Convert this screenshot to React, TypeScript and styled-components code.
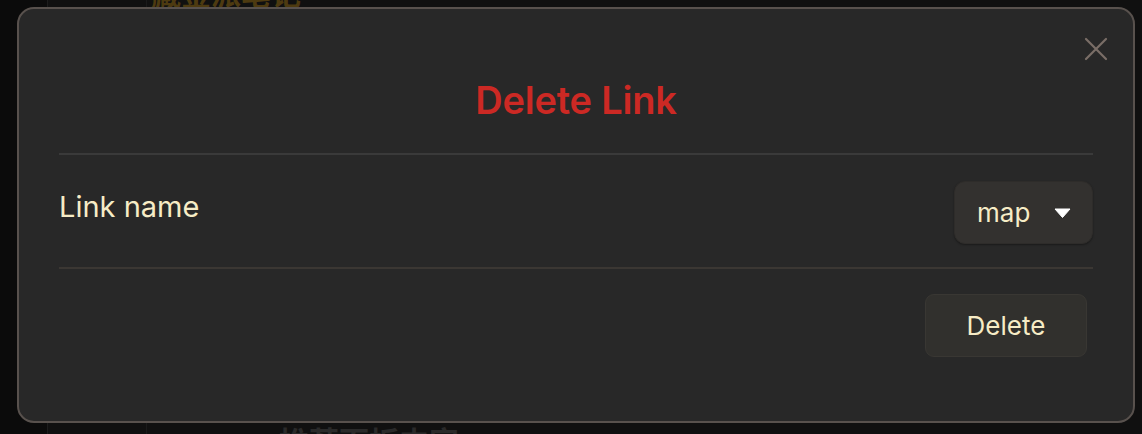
import React from "react";
import styled, { createGlobalStyle } from "styled-components";

const GlobalStyle = createGlobalStyle`
  html, body {
    margin: 0;
    padding: 0;
    background: #0c0c0c;
  }
  body {
    font-family: Inter, "Noto Sans", "Noto Sans CJK SC", sans-serif;
  }
  * {
    box-sizing: border-box;
  }
`;

const Page = styled.div`
  position: relative;
  display: flex;
  width: 1142px;
  height: 434px;
  overflow: hidden;
  background: #0c0c0c;
`;

const Rail = styled.div`
  width: 48px;
  flex-shrink: 0;
  background: #0b0b0b;
  border-right: 1px solid #1c1c1c;
`;

const SidePanel = styled.div`
  width: 99px;
  flex-shrink: 0;
  background: #101010;
  border-right: 1px solid #1a1a1a;
`;

const Main = styled.div`
  flex: 1;
  display: flex;
  flex-direction: column;
  justify-content: space-between;
  background: #101010;
  font-family: "Noto Sans CJK SC", sans-serif;
`;

const TopHeading = styled.div`
  margin-top: -30px;
  padding-left: 4px;
  font-size: 30px;
  font-weight: 700;
  color: #4d3a10;
`;

const BottomHeading = styled.div`
  margin-bottom: -28px;
  padding-left: 132px;
  font-size: 30px;
  font-weight: 700;
  color: #2a2a2a;
`;

const Modal = styled.div`
  position: absolute;
  left: 17px;
  top: 7px;
  width: 1118px;
  height: 416px;
  display: flex;
  flex-direction: column;
  padding: 0 40px;
  background: #282828;
  border: 2px solid #58514d;
  border-radius: 17px;
`;

const CloseButton = styled.button`
  position: absolute;
  top: 27px;
  right: 24px;
  width: 26px;
  height: 26px;
  display: flex;
  align-items: center;
  justify-content: center;
  padding: 0;
  background: none;
  border: none;
  cursor: pointer;
`;

const Title = styled.h2`
  margin: 0;
  height: 146px;
  display: flex;
  align-items: center;
  justify-content: center;
  padding-top: 38px;
  font-size: 38px;
  font-weight: 600;
  letter-spacing: -0.2px;
  color: #cc2924;
  border-bottom: 2px solid #3a3a3a;
`;

const Row = styled.div`
  height: 114px;
  display: flex;
  align-items: center;
  justify-content: space-between;
  border-bottom: 2px solid #3b3733;
`;

const Label = styled.span`
  margin-top: -10px;
  font-size: 29px;
  font-weight: 400;
  color: #f6ecc6;
`;

const Select = styled.div`
  width: 139px;
  height: 63px;
  margin-top: 3px;
  display: flex;
  align-items: center;
  justify-content: space-between;
  padding: 0 21px 0 22px;
  background: #33312f;
  border: 1px solid #2e2c2a;
  border-radius: 11px;
  box-shadow: 0 1px 2px rgba(0, 0, 0, 0.35);
  font-size: 26px;
  color: #f6ecc6;
`;

const Footer = styled.div`
  display: flex;
  justify-content: flex-end;
  padding: 25px 6px 0 0;
`;

const ActionButton = styled.button`
  width: 162px;
  height: 63px;
  background: #31302d;
  border: 1px solid #393733;
  border-radius: 9px;
  font-family: Inter, sans-serif;
  font-size: 26px;
  color: #f6ecc6;
  cursor: pointer;
`;

const CloseIcon = () => (
  <svg width="24" height="24" viewBox="0 0 24 24">
    <path d="M2 2 L22 22 M22 2 L2 22" stroke="#7a6e67" strokeWidth="2.2" strokeLinecap="round" />
  </svg>
);

const Caret = () => (
  <svg width="17" height="10" viewBox="0 0 17 10">
    <path d="M1 1 H16 L8.5 9.5 Z" fill="#ffffff" stroke="#ffffff" strokeWidth="1" strokeLinejoin="round" />
  </svg>
);

const App = () => {
  return (
    <>
      <GlobalStyle />
      <Page>
        <Rail />
        <SidePanel />
        <Main>
          <TopHeading>藏金派笔记</TopHeading>
          <BottomHeading>推荐面板内容</BottomHeading>
        </Main>
        <Modal>
          <CloseButton aria-label="Close">
            <CloseIcon />
          </CloseButton>
          <Title>Delete Link</Title>
          <Row>
            <Label>Link name</Label>
            <Select>
              <span>map</span>
              <Caret />
            </Select>
          </Row>
          <Footer>
            <ActionButton>Delete</ActionButton>
          </Footer>
        </Modal>
      </Page>
    </>
  );
};

export default App;
